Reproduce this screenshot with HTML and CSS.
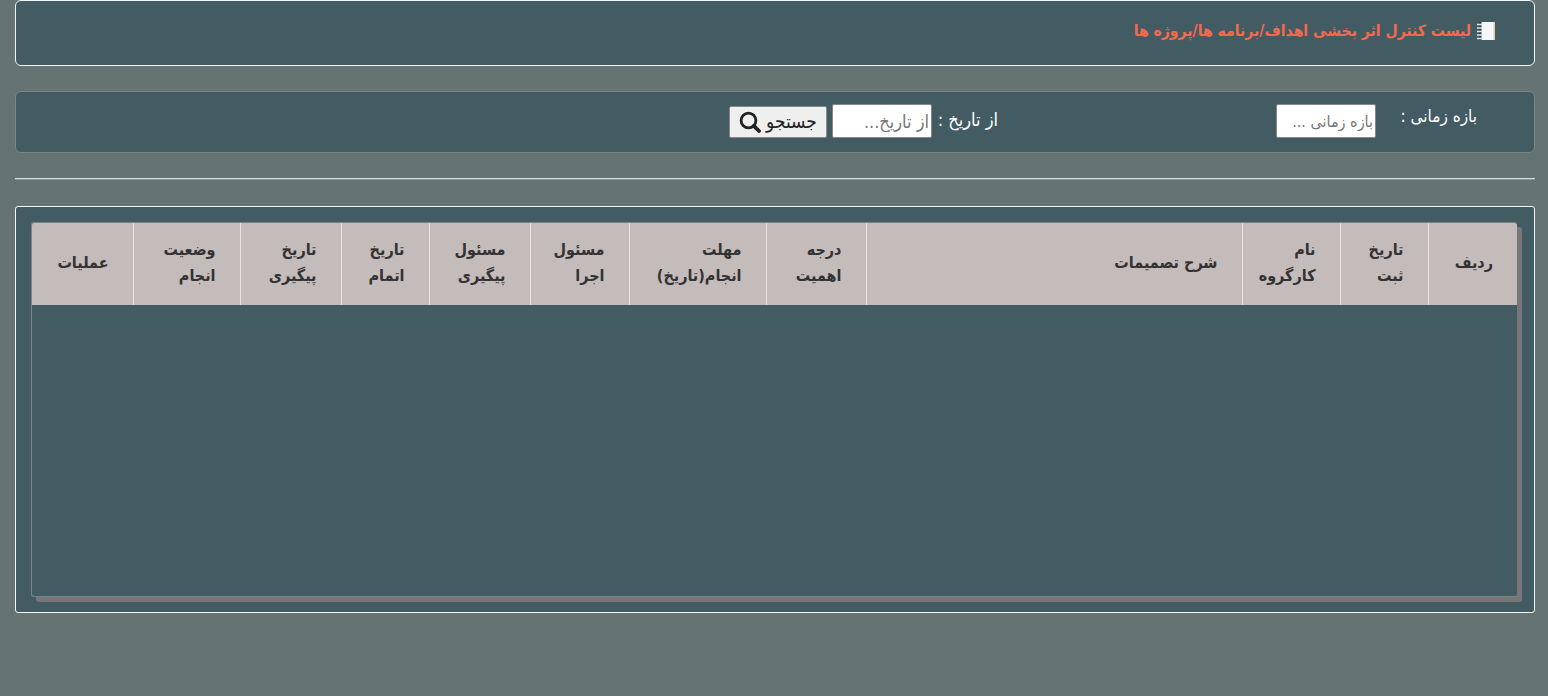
FILE: index.html
```html
<!DOCTYPE html>
<html lang="fa" dir="rtl">
<head>
<meta charset="utf-8">
<title>لیست کنترل اثر بخشی</title>
<link rel="stylesheet" href="styles.css">
</head>
<body>
<main class="page">
  <section class="panel title-panel">
    <h1 class="title">
      <svg class="note-icon" width="20" height="20" viewBox="0 0 20 20" aria-hidden="true">
        <rect x="3" y="1" width="16" height="18" fill="#f4f6f8"/>
        <rect x="17.5" y="1" width="1.5" height="18" fill="#e8c9a0"/>
        <rect x="3" y="1" width="2.5" height="18" fill="#2f3f4a"/>
        <path d="M1 3.5h5M1 7h5M1 10.5h5M1 14h5M1 17.5h5" stroke="#dfe6ea" stroke-width="1.6" fill="none"/>
      </svg>
      <span>لیست کنترل اثر بخشی اهداف/برنامه ها/پروژه ها</span>
    </h1>
  </section>

  <section class="panel filter-panel">
    <label class="range-label">بازه زمانی :</label>
    <input class="field" type="text" placeholder="بازه زمانی ...">
    <div class="from-group">
      <label class="from-label">از تاریخ :</label>
      <input class="field field-large" type="text" placeholder="از تاریخ...">
      <button class="search-btn" type="button">
        <span class="search-text">جستجو</span>
        <svg width="22" height="22" viewBox="0 0 22 22" aria-hidden="true">
          <circle cx="9.5" cy="9.5" r="7.4" fill="none" stroke="#222" stroke-width="2.8"/>
          <path d="M14.8 14.8 20 20" stroke="#222" stroke-width="3.8" stroke-linecap="round"/>
        </svg>
      </button>
    </div>
  </section>

  <hr class="rule">

  <section class="panel table-panel">
    <div class="table-wrap">
      <table class="grid">
        <colgroup>
          <col class="c1"><col class="c2"><col class="c3"><col class="c4"><col class="c5"><col class="c6">
          <col class="c7"><col class="c8"><col class="c9"><col class="c10"><col class="c11"><col class="c12">
        </colgroup>
        <thead>
          <tr>
            <th>ردیف</th>
            <th>تاریخ<br>ثبت</th>
            <th>نام<br>کارگروه</th>
            <th>شرح تصمیمات</th>
            <th>درجه<br>اهمیت</th>
            <th>مهلت<br>انجام(تاریخ)</th>
            <th>مسئول<br>اجرا</th>
            <th>مسئول<br>پیگیری</th>
            <th>تاریخ<br>اتمام</th>
            <th>تاریخ<br>پیگیری</th>
            <th>وضعیت<br>انجام</th>
            <th>عملیات</th>
          </tr>
        </thead>
      </table>
    </div>
  </section>
</main>
</body>
</html>
```

FILE: styles.css
```css
* { box-sizing: border-box; }
html, body { margin: 0; height: 100%; }
body {
  background: #667373;
  font-family: "DejaVu Sans Condensed", "DejaVu Sans", sans-serif;
  color: #fff;
  overflow: hidden;
}
.page { padding: 0 13px 0 15px; display: flex; flex-direction: column; }
.panel { background: #435c63; border-radius: 6px; }

.title-panel {
  height: 66px;
  border: 1px solid #f0f4f4;
  padding: 20px 38px 0 0;
}
.title {
  margin: 0;
  display: flex;
  align-items: center;
  gap: 5px;
  font-size: 15.6px;
  font-weight: 700;
  line-height: 20px;
  color: #f56a4f;
}
.note-icon { flex: none; }

.filter-panel {
  margin-top: 25px;
  height: 62px;
  border: 1px solid #7b8586;
  display: flex;
  align-items: flex-start;
  padding: 12px 57px 0 0;
}
.range-label { font-size: 17px; line-height: 24px; width: 77px; flex: none; white-space: nowrap; }
.field {
  width: 100px;
  height: 34px;
  border: 1px solid #888;
  border-radius: 2px;
  background: #fff;
  padding: 1px 2px;
  font: 16px "DejaVu Sans Condensed", "DejaVu Sans", sans-serif;
  color: #333;
}
.field-large { font-size: 18px; }
.field::placeholder { color: #777; opacity: 1; }
.filter-panel > .field { margin-right: 24px; }
.from-group {
  display: flex;
  align-items: flex-start;
  margin-right: 278px;
}
.from-label { font-size: 18px; line-height: 24px; width: 61px; white-space: nowrap; margin: 4px 0 0 5px; }
.search-btn {
  width: 98px;
  height: 32px;
  margin: 2px 5px 0 0;
  border: 1px solid #888;
  border-radius: 2px;
  background: #efefef;
  color: #222;
  font: 19px "DejaVu Sans Condensed", "DejaVu Sans", sans-serif;
  display: flex;
  align-items: center;
  justify-content: center;
  gap: 5px;
  padding: 0;
}
.search-text { padding-bottom: 3px; }

.rule {
  width: 100%;
  margin: 25px 0 0;
  border: 0;
  border-top: 1px solid #d8dcdc;
  border-bottom: 1px solid #8a9292;
  height: 2px;
}

.table-panel {
  margin-top: 26px;
  height: 407px;
  border: 1px solid #f4f6f6;
  border-radius: 3px;
  padding: 15px 17px 15px 15px;
}
.table-wrap {
  width: 1486px;
  height: 375px;
  border: 1px solid #7b8586;
  border-right: 0;
  border-radius: 3px;
  box-shadow: 5px 5px 0 #777;
  overflow: hidden;
}
.grid {
  width: 1485px;
  table-layout: fixed;
  border-collapse: collapse;
}
.c1 { width: 89px; }
.c2 { width: 88px; }
.c3 { width: 98px; }
.c4 { width: 376px; }
.c5 { width: 100px; }
.c6 { width: 137px; }
.c7 { width: 99px; }
.c8 { width: 101px; }
.c9 { width: 88px; }
.c10 { width: 101px; }
.c11 { width: 107px; }
.c12 { width: 101px; }
.grid th {
  height: 82px;
  padding: 0 24px 2px 10px;
  background: #c4bbbb;
  color: #333;
  font-size: 16px;
  font-weight: 700;
  line-height: 26px;
  text-align: right;
  border-left: 1px solid #e4e4e4;
}
.grid th:last-child { border-left: 0; }
```
